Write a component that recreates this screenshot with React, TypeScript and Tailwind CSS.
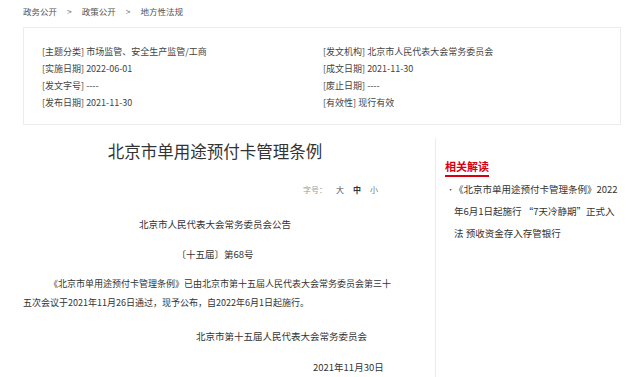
import React from "react";

const meta = [
  ["[主题分类]", "市场监管、安全生产监管/工商", "[发文机构]", "北京市人民代表大会常务委员会"],
  ["[实施日期]", "2022-06-01", "[成文日期]", "2021-11-30"],
  ["[发文字号]", "----", "[废止日期]", "----"],
  ["[发布日期]", "2021-11-30", "[有效性]", "现行有效"],
];

const Breadcrumb = () => (
  <div className="flex h-[22px] items-center gap-[10px] text-[8.5px] leading-[22px] text-[#555]">
    <span>政务公开</span>
    <span className="text-[#777]">&gt;</span>
    <span>政策公开</span>
    <span className="text-[#777]">&gt;</span>
    <span>地方性法规</span>
  </div>
);

const MetaBox = () => (
  <div className="mt-[5px] w-[598px] border border-[#ececec] px-[18px] pt-[15px] pb-[13px] text-[9px] leading-[17px] text-[#444]">
    {meta.map(([k1, v1, k2, v2]) => (
      <div key={k1} className="flex">
        <div className="w-[281px]">
          {k1} {v1}
        </div>
        <div>
          {k2} {v2}
        </div>
      </div>
    ))}
  </div>
);

const Article = () => (
  <div className="w-[384px] text-[#333]">
    <h1 className="mt-[14px] text-center text-[16.5px] leading-[24px] font-normal text-[#333]">
      北京市单用途预付卡管理条例
    </h1>
    <div className="mt-[20px] flex justify-end gap-[9px] pr-[29px] text-[8px] leading-[14px]">
      <span className="text-[#999]">字号：</span>
      <span className="text-[#555]">大</span>
      <span className="font-bold text-[#333]">中</span>
      <span className="text-[#777]">小</span>
    </div>
    <p className="mt-[17px] text-center text-[9.5px] leading-[20px]">北京市人民代表大会常务委员会公告</p>
    <p className="mt-[10px] text-center text-[9.5px] leading-[20px]">〔十五届〕第68号</p>
    <p className="mt-[10px] w-[370px] indent-[26px] text-[9px] leading-[19px]">
      《北京市单用途预付卡管理条例》已由北京市第十五届人民代表大会常务委员会第三十五次会议于2021年11月26日通过，现予公布，自2022年6月1日起施行。
    </p>
    <p className="mt-[14px] pl-[173px] text-[9.5px] leading-[20px]">北京市第十五届人民代表大会常务委员会</p>
    <p className="mt-[11px] pl-[290px] text-[9.5px] leading-[20px]">2021年11月30日</p>
  </div>
);

const Sidebar = () => (
  <div className="mt-[13px] ml-[28px] w-[187px] border-l border-[#ececec] pt-[14px] pl-[9px]">
    <div className="inline-block border-b-2 border-[#d7000f] pb-[1px] text-[11px] leading-[16px] font-bold text-[#d7000f]">
      相关解读
    </div>
    <div className="mt-[1px] flex text-[9.5px] leading-[22px] text-[#333]">
      <span className="w-[9px] shrink-0 pl-[2px] text-[7px]">•</span>
      <span className="w-[167px]">《北京市单用途预付卡管理条例》2022年6月1日起施行 “7天冷静期”正式入法 预收资金存入存管银行</span>
    </div>
  </div>
);

export default function App() {
  return (
    <div
      lang="zh-CN"
      className="h-[377px] w-[640px] overflow-hidden bg-white pl-[23px]"
      style={{ fontFamily: '"Noto Sans CJK SC", "Noto Sans", sans-serif' }}
    >
      <Breadcrumb />
      <MetaBox />
      <div className="flex">
        <Article />
        <Sidebar />
      </div>
    </div>
  );
}
